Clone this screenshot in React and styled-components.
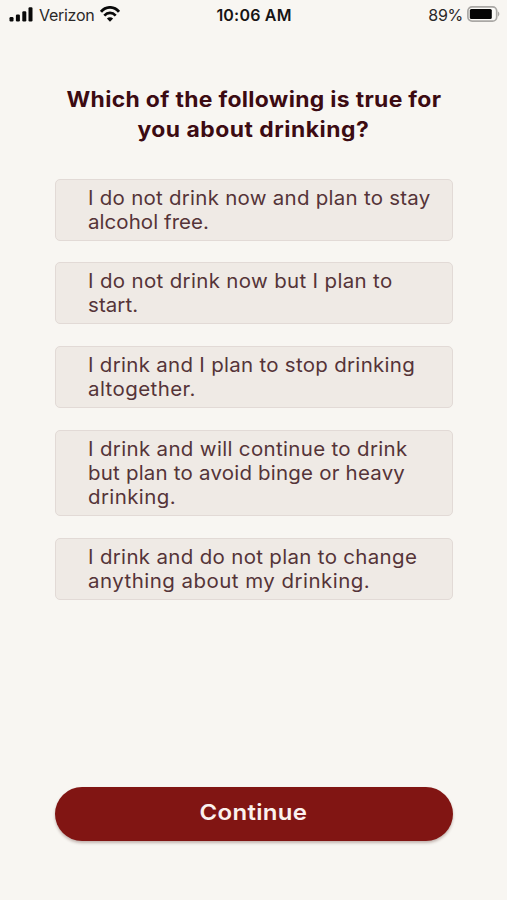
import React from 'react';
import styled, { createGlobalStyle } from 'styled-components';

const GlobalStyle = createGlobalStyle`
  body {
    margin: 0;
    background: #f8f6f2;
    font-family: Inter, 'Open Sans', sans-serif;
  }
`;

const Screen = styled.main`
  box-sizing: border-box;
  width: 507px;
  height: 900px;
  display: flex;
  flex-direction: column;
  overflow: hidden;
  background: #f8f6f2;
`;

const StatusBar = styled.header`
  box-sizing: border-box;
  height: 30px;
  flex-shrink: 0;
  padding: 0 7px 0 9px;
  display: grid;
  grid-template-columns: 1fr auto 1fr;
  align-items: center;
  color: #2a2828;
  font-size: 16px;
  line-height: 30px;
`;

const StatusGroup = styled.div`
  display: flex;
  align-items: center;
  justify-content: ${(p) => (p.$end ? 'flex-end' : 'flex-start')};
  gap: ${(p) => p.$gap}px;
  letter-spacing: -0.28px;

  svg {
    display: block;
    flex-shrink: 0;
    margin-bottom: 2px;
  }
`;

const Clock = styled.time`
  margin-right: 1px;
  color: #161414;
  font-weight: 600;
  letter-spacing: 0.2px;
`;

const Content = styled.section`
  flex: 1;
  display: flex;
  flex-direction: column;
  padding: 55px 54px 59.5px 54.5px;
`;

const Question = styled.h1`
  margin: 0 0 34.8px;
  display: flex;
  flex-direction: column;
  align-items: center;
  color: #3c0b12;
  font-size: 21px;
  font-weight: 700;
  line-height: 29.5px;
`;

const TextLine = styled.span`
  display: block;
  white-space: nowrap;
  letter-spacing: ${(p) => p.$tracking}px;
  transform: scaleX(${(p) => p.$stretch});
  transform-origin: ${(p) => p.$origin || 'center'};
`;

const OptionList = styled.div`
  display: flex;
  flex-direction: column;
  gap: 21.7px;
`;

const Option = styled.button`
  box-sizing: border-box;
  width: 100%;
  margin: 0;
  padding: 6px 20px 6px 32.5px;
  border: 1px solid #e2dad6;
  border-radius: 5px;
  background: #efeae5;
  color: #553438;
  font: 400 19.5px/24px Inter, 'Open Sans', sans-serif;
  text-align: left;
`;

const ContinueButton = styled.button`
  height: 54px;
  flex-shrink: 0;
  margin: auto 0 0;
  padding: 0 0 3px;
  display: flex;
  align-items: center;
  justify-content: center;
  border: 0;
  border-radius: 27px;
  background: #811513;
  box-shadow: 0 2px 3px rgba(70, 25, 20, 0.3);
  color: #fbf1ee;
  font: 600 22px/28px Inter, 'Open Sans', sans-serif;
`;

const options = [
  [['I do not drink now and plan to stay', 0.25], ['alcohol free.', 0.06]],
  [['I do not drink now but I plan to', 0.32], ['start.', 0.08]],
  [['I drink and I plan to stop drinking', 0.28], ['altogether.', 0.4]],
  [
    ['I drink and will continue to drink', 0.32],
    ['but plan to avoid binge or heavy', 0.2],
    ['drinking.', 0.38],
  ],
  [['I drink and do not plan to change', 0.31], ['anything about my drinking.', 0.45]],
];

function SignalIcon() {
  return (
    <svg width="24" height="16" viewBox="0 0 24 16" fill="#090909">
      <rect x="0.5" y="11" width="4" height="4.4" rx="1.2" />
      <rect x="6.9" y="8.6" width="4" height="6.8" rx="1.2" />
      <rect x="13.3" y="5.2" width="4" height="10.2" rx="1.2" />
      <rect x="19.5" y="1.2" width="4" height="14.2" rx="1.2" />
    </svg>
  );
}

function WifiIcon() {
  return (
    <svg width="20" height="16" viewBox="0 0 20 16" fill="none" stroke="#090909">
      <path d="M1 5.8C6-.1 14-.1 19 5.8" strokeWidth="2.8" />
      <path d="M4.3 9.6c3.3-3.7 8.1-3.7 11.4 0" strokeWidth="2.6" />
      <path d="M10 15.7 6.9 12.5c1.8-1.7 4.4-1.7 6.2 0Z" fill="#090909" stroke="none" />
    </svg>
  );
}

function BatteryIcon() {
  return (
    <svg width="33" height="16" viewBox="0 0 33 16">
      <rect x="0.9" y="0.9" width="28.8" height="14.2" rx="4.2" fill="#fbfaf7" stroke="#aaa8a5" strokeWidth="1.7" />
      <rect x="2.8" y="3" width="22" height="10" rx="1.5" fill="#050505" />
      <path d="M31 5.6c1.8.7 1.8 4.1 0 4.8Z" fill="#aaa8a5" />
    </svg>
  );
}

export default function App() {
  return (
    <Screen>
      <GlobalStyle />
      <StatusBar>
        <StatusGroup $gap={6}>
          <SignalIcon />
          <span>Verizon</span>
          <WifiIcon />
        </StatusGroup>
        <Clock>10:06 AM</Clock>
        <StatusGroup $end $gap={4}>
          <span>89%</span>
          <BatteryIcon />
        </StatusGroup>
      </StatusBar>
      <Content>
        <Question>
          <TextLine $tracking={0.3} $stretch={1.09}>Which of the following is true for</TextLine>
          <TextLine $tracking={0.46} $stretch={1.09}>you about drinking?</TextLine>
        </Question>
        <OptionList>
          {options.map((lines) => (
            <Option key={lines[0][0]} type="button">
              {lines.map(([text, tracking]) => (
                <TextLine key={text} $tracking={tracking} $stretch={1.05} $origin="left">
                  {text}
                </TextLine>
              ))}
            </Option>
          ))}
        </OptionList>
        <ContinueButton type="button">
          <TextLine $tracking={0.3} $stretch={1.09}>Continue</TextLine>
        </ContinueButton>
      </Content>
    </Screen>
  );
}
